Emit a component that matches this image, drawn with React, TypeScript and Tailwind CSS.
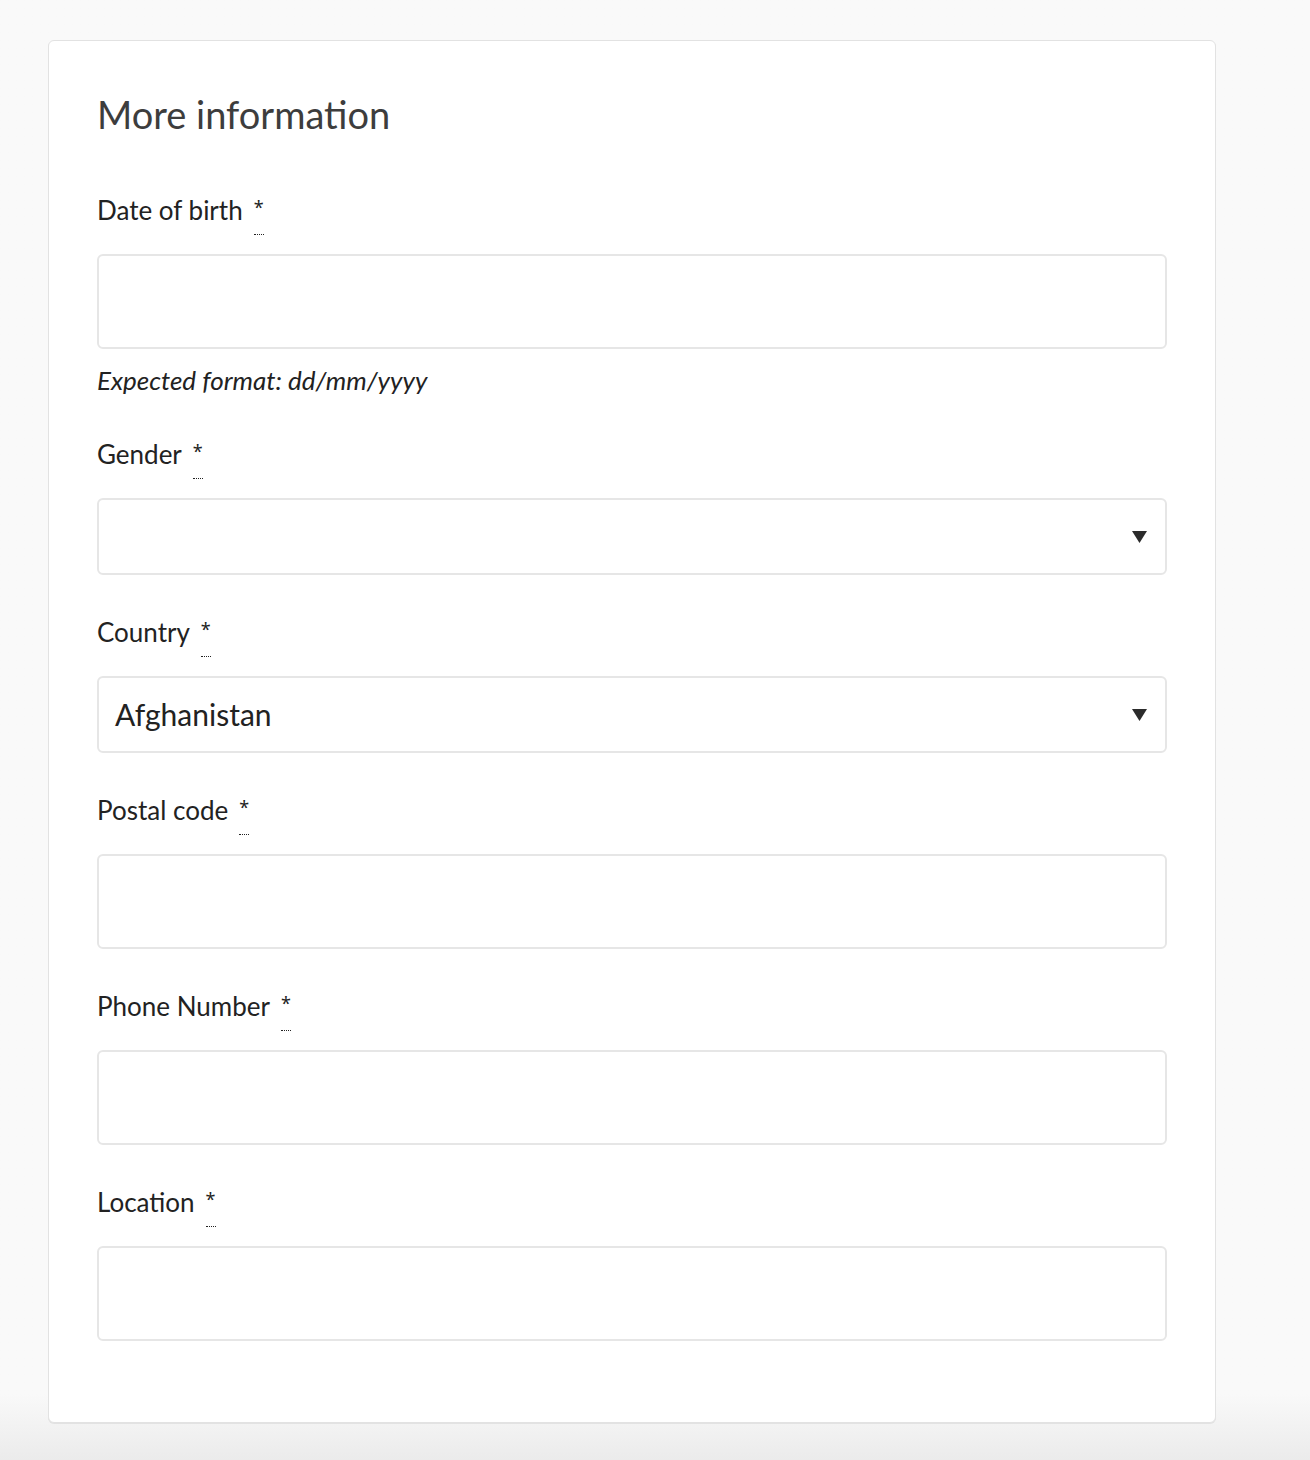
import React from "react";

const fields = [
  { label: "Date of birth", type: "input", help: "Expected format: dd/mm/yyyy" },
  { label: "Gender", type: "select", value: "" },
  { label: "Country", type: "select", value: "Afghanistan" },
  { label: "Postal code", type: "input" },
  { label: "Phone Number", type: "input" },
  { label: "Location", type: "input" },
];

const Caret = () => (
  <svg width="15" height="12" viewBox="0 0 15 12" className="shrink-0">
    <path d="M0 0 H15 L7.5 12 Z" fill="#2b2b2b" />
  </svg>
);

const App = () => {
  return (
    <div
      className="min-h-[1460px] bg-linear-to-b from-[#f9f9f9] from-[95.5%] to-[#ebebeb] pl-[48px] pt-[40px] pb-[37px]"
      style={{ fontFamily: "Lato, 'Noto Sans', sans-serif" }}
    >
      <div className="w-[1168px] bg-white border border-[#e2e2e2] rounded-md shadow-[0_1px_0_#e2e2e2] px-[48px] pt-[50px] pb-[81px]">
        <h2 className="text-[38px] leading-[46px] text-[#3d3d3d] font-normal">
          More information
        </h2>

        <div className="flex flex-col mt-[58px]">
          {fields.map((f, i) => (
            <div
              key={f.label}
              className={i === 0 ? "" : i === 1 ? "mt-[43px]" : "mt-[42px]"}
            >
              <label className="flex items-start h-[31px] text-[26px] leading-[31px] text-[#222]">
                <span>{f.label}</span>
                <abbr
                  title="required"
                  className="ml-[11px] shrink-0 h-[40px] no-underline border-b border-dotted border-[#222] text-[18px] leading-[24px]"
                  style={{ fontFamily: "'Noto Sans', sans-serif" }}
                >
                  *
                </abbr>
              </label>
              {f.type === "input" ? (
                <div className="mt-[28px] h-[95px] rounded-md border-2 border-[#e6e6e6] bg-white" />
              ) : (
                <div className="mt-[28px] h-[77px] rounded-md border-2 border-[#e6e6e6] bg-white flex items-center justify-between pl-[16px] pr-[18px]">
                  <span className="text-[30px] text-[#222]">{f.value}</span>
                  <Caret />
                </div>
              )}
              {f.help && (
                <p className="mt-[16px] text-[26px] leading-[31px] italic text-[#222]">
                  {f.help}
                </p>
              )}
            </div>
          ))}
        </div>
      </div>
    </div>
  );
};

export default App;
